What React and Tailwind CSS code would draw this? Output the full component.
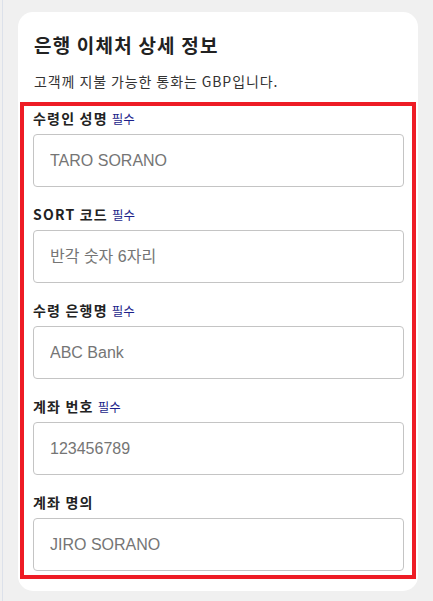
const FIELDS = [
  { label: "수령인 성명", required: true, value: "TARO SORANO" },
  { label: "SORT 코드", required: true, value: "반각 숫자 6자리" },
  { label: "수령 은행명", required: true, value: "ABC Bank" },
  { label: "계좌 번호", required: true, value: "123456789" },
  { label: "계좌 명의", required: false, value: "JIRO SORANO" },
];

const Field = ({ label, required, value }) => (
  <div className="flex flex-col">
    <div className="h-[18px] flex items-baseline gap-[4px] leading-[18px]">
      <span className="text-[14px] font-bold tracking-[1.2px] text-[#222]">{label}</span>
      {required && <span className="text-[12.5px] text-[#1c1f8a]">필수</span>}
    </div>
    <input
      readOnly
      placeholder={value}
      className="mt-[7px] h-[53px] w-full rounded-[4px] border border-[#c4c4c4] bg-white px-4 text-[16px] text-[#757575] placeholder:text-[#757575] outline-none"
      style={{ fontFamily: '"Liberation Sans", "Noto Sans CJK KR", sans-serif' }}
    />
  </div>
);

export default function App() {
  return (
    <div
      className="min-h-screen bg-[#f0f0f0] pl-[2px]"
      style={{ fontFamily: '"Noto Sans CJK KR", "Noto Sans", sans-serif' }}
    >
      <div className="min-h-[601px] border-l border-[#dce1ea] pl-[15px] pt-3 pb-3">
        <div className="w-[400px] rounded-[15px] bg-white pt-[19px] pb-3">
          <h2 className="px-4 text-[19px] font-bold leading-[28px] tracking-[1.2px] text-[#222]">
            은행 이체처 상세 정보
          </h2>
          <p className="mt-[12px] px-4 text-[14px] leading-[20px] tracking-[0.9px] text-[#333]">
            고객께 지불 가능한 통화는 GBP입니다.
          </p>
          <div className="mx-[2px] mt-[11px] border-4 border-[#ee1c25] pl-[9px] pr-2 pt-[3px] pb-[4px]">
            <div className="flex flex-col gap-[18px]">
              {FIELDS.map((f) => (
                <Field key={f.label} {...f} />
              ))}
            </div>
          </div>
        </div>
      </div>
    </div>
  );
}
